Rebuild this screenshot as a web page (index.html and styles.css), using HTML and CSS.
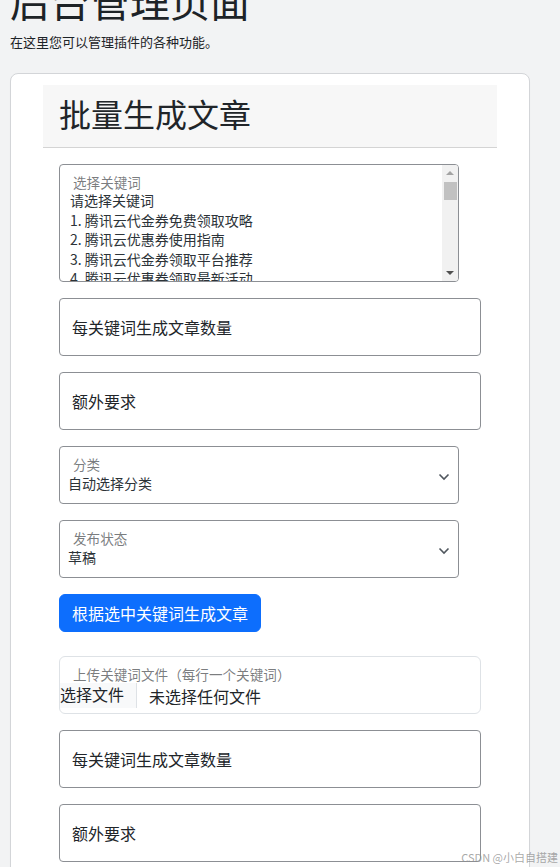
FILE: index.html
```html
<!DOCTYPE html>
<html lang="zh-CN">
<head>
<meta charset="utf-8">
<title>后台管理页面</title>
<link rel="stylesheet" href="styles.css">
</head>
<body>
<div class="wrap">
  <h1 class="page-title">后台管理页面</h1>
  <p class="page-desc">在这里您可以管理插件的各种功能。</p>

  <div class="card">
    <div class="card-header">
      <h2 class="card-title">批量生成文章</h2>
    </div>
    <div class="card-body">
      <div class="field listbox">
        <div class="listbox-options" role="listbox">
          <div class="opt">请选择关键词</div>
          <div class="opt">1. 腾讯云代金券免费领取攻略</div>
          <div class="opt">2. 腾讯云优惠券使用指南</div>
          <div class="opt">3. 腾讯云代金券领取平台推荐</div>
          <div class="opt">4. 腾讯云优惠券领取最新活动</div>
          <div class="opt">5. 腾讯云代金券使用技巧</div>
        </div>
        <div class="scrollbar">
          <span class="sb-up"></span>
          <span class="sb-thumb"></span>
          <span class="sb-space"></span>
          <span class="sb-down"></span>
        </div>
        <label class="float-label">选择关键词</label>
      </div>

      <div class="field text-input"><span class="ph">每关键词生成文章数量</span></div>
      <div class="field text-input"><span class="ph">额外要求</span></div>

      <div class="field select-box">
        <label class="float-label">分类</label>
        <span class="select-value">自动选择分类</span>
        <svg class="chevron" width="12" height="8" viewBox="0 0 12 8"><path d="M1.5 1.5 L6 6 L10.5 1.5" fill="none" stroke="#50575e" stroke-width="1.6"/></svg>
      </div>
      <div class="field select-box">
        <label class="float-label">发布状态</label>
        <span class="select-value">草稿</span>
        <svg class="chevron" width="12" height="8" viewBox="0 0 12 8"><path d="M1.5 1.5 L6 6 L10.5 1.5" fill="none" stroke="#50575e" stroke-width="1.6"/></svg>
      </div>

      <button class="btn-primary" type="button">根据选中关键词生成文章</button>

      <div class="field file-box">
        <label class="float-label">上传关键词文件（每行一个关键词）</label>
        <div class="file-row">
          <span class="file-btn">选择文件</span>
          <span class="file-name">未选择任何文件</span>
        </div>
      </div>

      <div class="field text-input"><span class="ph">每关键词生成文章数量</span></div>
      <div class="field text-input"><span class="ph">额外要求</span></div>
    </div>
  </div>
</div>
<div class="watermark">CSDN @小白自搭建</div>
</body>
</html>
```

FILE: styles.css
```css
html, body {
  margin: 0;
  padding: 0;
}
body {
  background: #f2f3f4;
  font-family: "Microsoft YaHei", "Noto Sans CJK SC", "Noto Sans", sans-serif;
  color: #1d2327;
  overflow: hidden;
  height: 867px;
}
.wrap {
  padding-left: 10px;
}
.page-title {
  font-size: 40px;
  font-weight: 400;
  line-height: 48px;
  margin: -24px 0 0 0;
  color: #1d2327;
}
.page-desc {
  font-size: 13px;
  line-height: 20px;
  margin: 8px 0 0 0;
  color: #1d2327;
}
.card {
  box-sizing: border-box;
  width: 520px;
  margin-top: 21px;
  background: #fff;
  border: 1px solid #d3d5d8;
  border-radius: 8px;
  box-shadow: 0 1px 1px rgba(0,0,0,.04);
  padding: 11px 32px 0 32px;
  height: 900px;
}
.card-header {
  box-sizing: border-box;
  height: 63px;
  background: #f7f7f7;
  border-bottom: 1px solid #d4d4d4;
  padding: 6px 16px 0 16px;
}
.card-title {
  margin: 0;
  font-size: 32px;
  font-weight: 400;
  line-height: 44px;
  color: #212529;
}
.card-body {
  padding: 16px 16px 0 16px;
  display: flex;
  flex-direction: column;
  align-items: flex-start;
}
.field {
  position: relative;
  box-sizing: border-box;
  margin-bottom: 16px;
}
.float-label {
  position: absolute;
  left: 13px;
  top: 10px;
  font-size: 13.6px;
  line-height: 15px;
  color: rgba(33,37,41,.6);
}
/* listbox */
.listbox {
  width: 400px;
  height: 118px;
  border: 1px solid #8c8f94;
  border-radius: 4px;
  display: flex;
  overflow: hidden;
}
.listbox-options {
  flex: 1;
  padding: 26px 0 0 8px;
  overflow: hidden;
}
.opt {
  font-size: 14px;
  line-height: 19.6px;
  height: 19.6px;
  padding: 0 2px;
  color: #2c3338;
  white-space: nowrap;
}
.scrollbar {
  width: 16px;
  background: #f1f1f1;
  display: flex;
  flex-direction: column;
  align-items: center;
}
.sb-up, .sb-down {
  height: 16px;
  width: 16px;
  position: relative;
}
.sb-up::after, .sb-down::after {
  content: "";
  position: absolute;
  left: 4px;
  width: 0;
  height: 0;
  border-left: 4px solid transparent;
  border-right: 4px solid transparent;
}
.sb-up::after {
  top: 6px;
  border-bottom: 4px solid #a3a3a3;
}
.sb-down::after {
  top: 6px;
  border-top: 4px solid #505050;
}
.sb-thumb {
  width: 13px;
  height: 18px;
  background: #c1c1c1;
  margin-top: 1px;
}
.sb-space {
  flex: 1;
}
/* text inputs */
.text-input {
  width: 422px;
  height: 58px;
  border: 1px solid #8c8f94;
  border-radius: 4px;
  background: #fff;
  display: flex;
  align-items: center;
  padding-left: 12px;
}
.ph {
  font-size: 16px;
  line-height: 22px;
  color: #212529;
}
/* selects */
.select-box {
  width: 400px;
  height: 58px;
  border: 1px solid #8c8f94;
  border-radius: 4px;
  background: #fff;
  padding: 26px 24px 0 8px;
}
.select-value {
  display: block;
  font-size: 14px;
  line-height: 20px;
  color: #2c3338;
}
.chevron {
  position: absolute;
  right: 8px;
  top: 26px;
}
/* button */
.btn-primary {
  height: 38px;
  padding: 0 12px;
  border: 1px solid #0d6efd;
  border-radius: 6px;
  background: #0d6efd;
  color: #fff;
  font-family: inherit;
  font-size: 16px;
  line-height: 24px;
  margin: 0 0 24px 0;
  cursor: pointer;
}
/* file input */
.file-box {
  width: 422px;
  height: 58px;
  border: 1px solid #dee2e6;
  border-radius: 6px;
  background: #fff;
  padding-top: 26px;
}
.file-row {
  display: flex;
  align-items: center;
  height: 25px;
}
.file-btn {
  box-sizing: border-box;
  height: 25px;
  padding: 0 12px 0 0;
  width: 77px;
  background: #f8f9fa;
  border-right: 1px solid #dee2e6;
  font-size: 16px;
  line-height: 22px;
  color: #212529;
  text-align: right;
}
.file-name {
  margin-left: 12px;
  font-size: 16px;
  line-height: 22px;
  color: #212529;
}
.watermark {
  position: absolute;
  right: 2px;
  top: 849px;
  font-size: 11px;
  line-height: 16px;
  color: rgba(140,140,140,.75);
}
```
